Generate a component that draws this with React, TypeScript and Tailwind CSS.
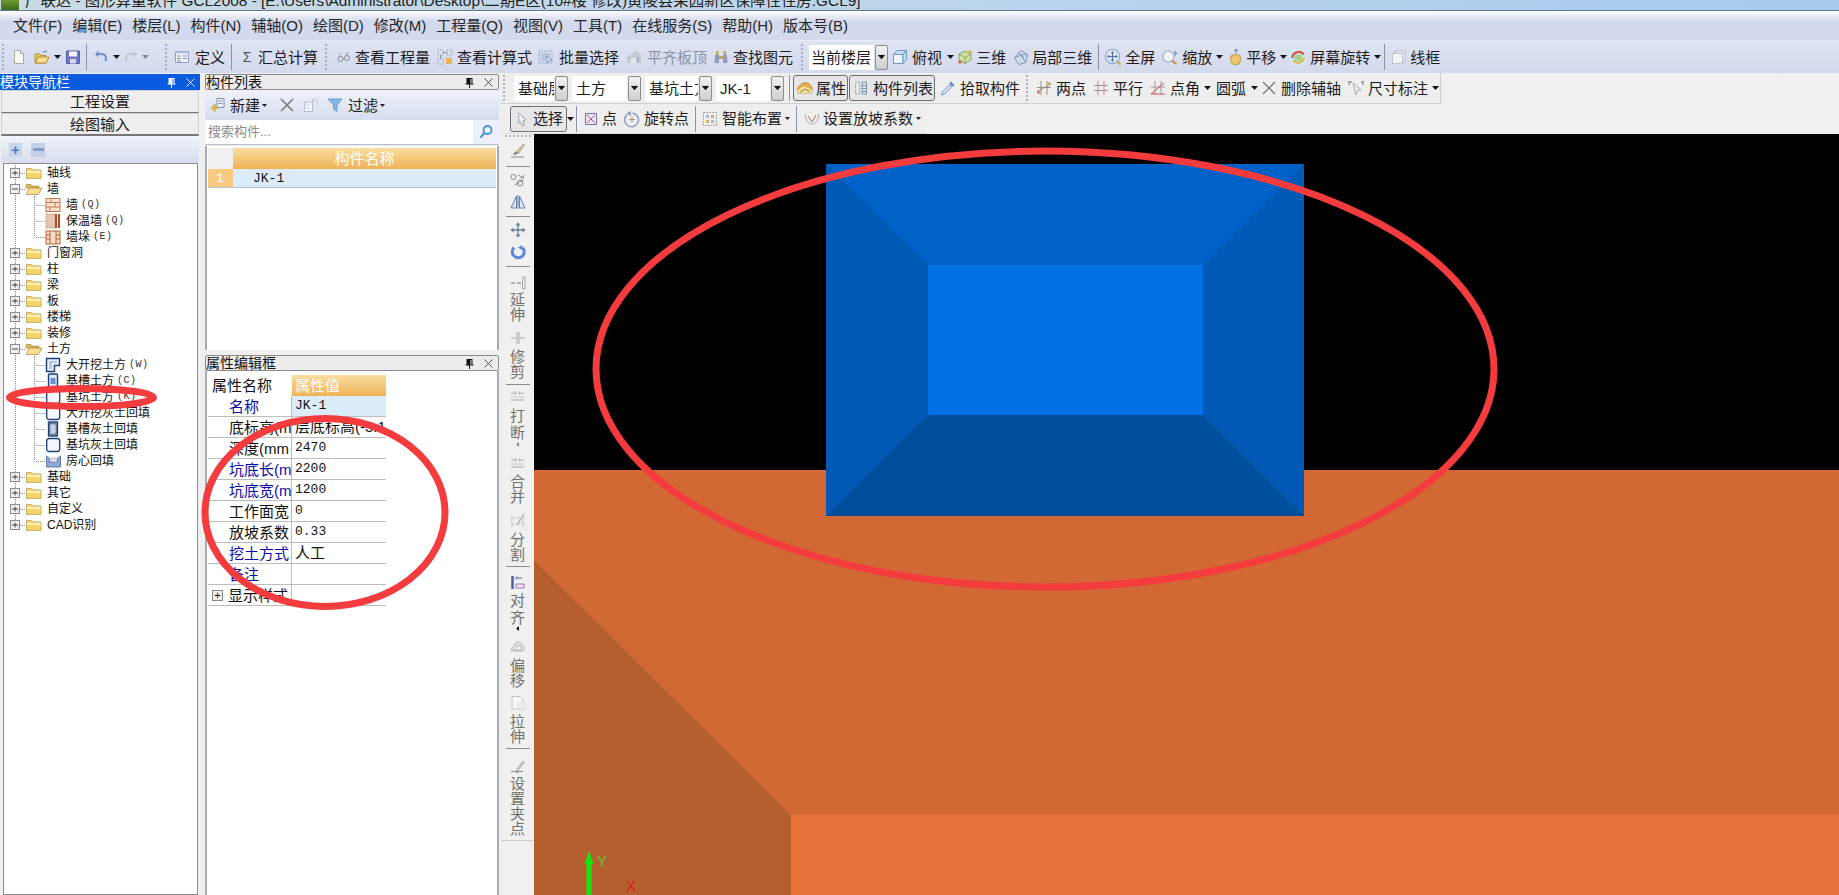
import React from 'react';

const Ic = ({ children, className = '' }: { children: React.ReactNode; className?: string }) => (
  <svg viewBox="0 0 16 16" fill="none" className={'w-4 h-4 shrink-0 ' + className}>
    {children}
  </svg>
);

// toolbar bits
const Arrow = ({ className = '', gray = false }: { className?: string; gray?: boolean }) => (
  <svg viewBox="0 0 7 4" className={'w-[7px] h-1 shrink-0 ' + className}>
    <path d="M0 0h7L3.5 4z" fill={gray ? '#7d8494' : '#111'} />
  </svg>
);
const SmallArrow = ({ className = '' }: { className?: string }) => (
  <svg viewBox="0 0 5 3" className={'w-[5px] h-[3px] shrink-0 ' + className}>
    <path d="M0 0h5L2.5 3z" fill="#222" />
  </svg>
);
const Sep = ({ className = '' }: { className?: string }) => (
  <div className={'w-px h-[26px] bg-[#8b93a3] shrink-0 ' + className} />
);
const Grip = ({ className = '' }: { className?: string }) => (
  <div className={'w-[3px] h-[26px] border-l-2 border-dotted border-[#a7aebd] shrink-0 ' + className} />
);
const Label = ({ children, className = '' }: { children: React.ReactNode; className?: string }) => (
  <span className={'text-[15px] leading-none whitespace-nowrap shrink-0 ' + className}>{children}</span>
);
const Select = ({ text, className = '', box = '' }: { text: string; className?: string; box?: string }) => (
  <div className={'flex h-[25px] shrink-0 ' + className}>
    <div className={'flex-1 bg-white overflow-hidden whitespace-nowrap text-[15px] leading-[25px] pl-1 ' + box}>{text}</div>
    <div className="w-[13px] ml-px border border-[#8d8d8d] rounded-[2px] bg-linear-to-b from-[#f2f2f2] to-[#cfcfcf] flex items-center justify-center">
      <Arrow className="scale-[1.1]" />
    </div>
  </div>
);
const Pressed = ({ children, className = '' }: { children: React.ReactNode; className?: string }) => (
  <div className={'flex items-center h-[26px] shrink-0 rounded-[3px] border border-[#6f6f6f] bg-[#e6e6e6] ' + className}>{children}</div>
);

// drawn icons
const NewFile = () => (
  <Ic><path d="M3.5 1.5h6l3 3v10h-9z" fill="#fbfbf6" stroke="#a8a8a0" /><path d="M9.5 1.5v3h3" fill="#e6e6de" stroke="#a8a8a0" /></Ic>
);
const OpenFile = () => (
  <Ic><path d="M1 5h5l1 1.5h5V14H1z" fill="#f0c860" stroke="#b08f3c" /><path d="M1.5 14 4 8h11l-3 6z" fill="#fae08e" stroke="#b08f3c" /><path d="M9 4c1-2 3-2 4-1" stroke="#5a7fc0" /></Ic>
);
const Save = () => (
  <Ic><path d="M1.5 2h13v12.500h-13z" fill="#6f77c6" stroke="#555ca8" /><path d="M4 2.500h8v5H4z" fill="#f4f4fa" /><path d="M5 10h6v4.500H5z" fill="#d6d8e6" /></Ic>
);
const Undo = ({ muted = false }: { muted?: boolean }) => (
  <Ic>
    <path d="M12.500 12c1.500-3 0-7-4-7H4" stroke={muted ? '#bcc8d6' : '#6f92cf'} strokeWidth="2.200" />
    <path d="M5.500 1.500 2 5l3.500 3.500z" fill={muted ? '#bcc8d6' : '#6f92cf'} />
  </Ic>
);
const Redo = () => (
  <Ic>
    <path d="M3.500 12c-1.500-3 0-7 4-7H12" stroke="#bcc8d6" strokeWidth="2.200" />
    <path d="M10.500 1.500 14 5l-3.500 3.500z" fill="#bcc8d6" />
  </Ic>
);
const Define = () => (
  <Ic><path d="M1.500 2.500h13v11h-13z" fill="#f2f5fb" stroke="#8da0c0" /><path d="M1.500 2.500h13v2h-13z" fill="#b5c5e0" /><path d="M3 7h4M3 9.500h4M3 12h4M9 7h4M9 9.500h4" stroke="#7f90ad" /></Ic>
);
const Glasses = () => (
  <Ic><circle cx="4.500" cy="10" r="2.500" stroke="#8d8d8d" /><circle cx="11" cy="9" r="2.500" stroke="#8d8d8d" /><path d="M7 10l1.500-1M3 8l2-4M10 7l2-4" stroke="#9b9b9b" /></Ic>
);
const Calc = () => (
  <Ic><path d="M1 1h5v5H1zM10 1h5v5h-5zM1 10h5v5H1z" fill="#dde3ef" stroke="#8a97b0" strokeDasharray="1 1" /><path d="M9 9h6v6H9z" fill="#e9b257" /><path d="M6 3.500h4M3.500 6v4" stroke="#8a97b0" /></Ic>
);
const Batch = () => (
  <Ic><path d="M1 2h13v12H1z" stroke="#7f9cc8" strokeDasharray="1.500 1" /><path d="M3 4h9v8H3z" fill="#b9c8e2" /><path d="M8 7l6 4-3 .5L9.500 14z" fill="#e8eefa" stroke="#6a82a8" strokeWidth=".7" /></Ic>
);
const AlignTop = () => (
  <Ic><path d="M1 14V8l9-6 5 3v9z" fill="#c4c9d2" /><path d="M5 14V9h5v5z" fill="#e4e7ed" /><path d="M12 8v6" stroke="#9aa1ad" /></Ic>
);
const Binoculars = () => (
  <Ic><path d="M2 6h4v8H1.500zM10 6h4l.5 8H10z" fill="#8f9cb5" /><path d="M3 2h2.500v4H3zM10.500 2H13v4h-2.500zM6 7h4v3H6z" fill="#c6a55b" /></Ic>
);
const Cube = () => (
  <Ic><path d="M1.500 5.500h9.500v9H1.500z" fill="#eef5fb" stroke="#6d9ac6" /><path d="M1.500 5.500 5 1.500h9.500l-3.500 4zM11 5.500l3.500-4v9l-3.500 4z" fill="#c3dcee" stroke="#6d9ac6" /></Ic>
);
const ThreeD = () => (
  <Ic><path d="M8 2l6 3v6l-6 3.500L2 11V5z" fill="#cfe0a6" stroke="#86a860" /><path d="M2 5l6 3.500L14 5M8 8.500v6" stroke="#86a860" /><circle cx="13" cy="3" r="1.800" fill="#e0b43c" /><circle cx="3" cy="13" r="1.800" fill="#d46b50" /></Ic>
);
const PartCube = () => (
  <Ic><path d="M8 1.500l6.500 4-2 8-6.500 2L1.500 9z" fill="#cfdcec" stroke="#7f97b5" /><path d="M1.500 9 8 6l4.500 7.500M8 6l6.500-.5M5 3.500l6 5.500" stroke="#7f97b5" /></Ic>
);
const FullScreen = () => (
  <Ic className="scale-[1.1]"><circle cx="7.500" cy="7.500" r="6.500" fill="#dbe6f4" stroke="#8ea3c2" /><path d="M7.500 3.500v8M3.500 7.500h8" stroke="#4f72a8" /><path d="M7.500 2.500 6 4.500h3zM7.500 12.500 6 10.500h3zM2.500 7.500l2-1.500v3zM12.500 7.500l-2-1.500v3z" fill="#4f72a8" /><path d="M12 12l3 3" stroke="#c7a75a" strokeWidth="2" /></Ic>
);
const Zoom = () => (
  <Ic className="scale-[1.1]"><circle cx="6.500" cy="7.500" r="5" fill="#f2f6fb" stroke="#98a8be" /><path d="M10 11.500l4 3" stroke="#b89a58" strokeWidth="2" /><path d="M13 2v5M11 4.500h4" stroke="#7f9cbf" /></Ic>
);
const Pan = () => (
  <Ic className="scale-[1.1]"><path d="M4 9c0-2 1-3 3-3h3c2 0 3 2 3 4 0 3-2 5-5 5-3 0-4-2-4-6z" fill="#ecc874" stroke="#c09d4c" /><path d="M9 1v4M7.500 2.500 9 1l1.500 1.500" stroke="#7f8ea8" /></Ic>
);
const ScreenRotate = () => (
  <Ic className="scale-[1.15]"><path d="M1 1h14v14H1z" fill="#cfeaf5" /><path d="M3 9a5.500 5.500 0 0 1 10-3" stroke="#d9534f" strokeWidth="2" /><path d="M13 8a5 5 0 0 1-9 3" stroke="#e5b64d" strokeWidth="2" /><path d="M5 6h6v5H5z" fill="#9ccf8a" /></Ic>
);
const WireFrame = () => (
  <Ic><path d="M1.500 4.500h10v10h-10z" fill="#f2f4f8" stroke="#c1c6d0" /><path d="M1.500 4.500l3-3h10v10l-3 3M4.500 1.500v3" stroke="#c1c6d0" /></Ic>
);
const PropIcon = () => (
  <Ic><path d="M1 7 6 3h5l4 4v6H1z" fill="#e4b14b" stroke="#9c7a30" strokeWidth=".7" /><path d="M1 10l6-4 8 4v3H1z" fill="#f7e09c" /><path d="M3 12l5-3 5 3" stroke="#6a8a45" /></Ic>
);
const ListIcon = () => (
  <Ic><path d="M2.500 2h4v12h-4z" stroke="#7d8fae" strokeDasharray="1 1" /><path d="M9 2h4.500v12H9z" stroke="#7d8fae" /><path d="M9 5.500h4.500M9 8.500h4.500M9 11.500h4.500" stroke="#7d8fae" /></Ic>
);
const Picker = () => (
  <Ic><path d="M11 1.500l3.500 3.500-2 2-3.500-3.500z" fill="#6c8fc2" /><path d="M9.500 5 2.500 12l-1 3 3-1 7-7z" fill="#dbe7f5" stroke="#6c8fc2" /></Ic>
);
const TwoPoint = () => (
  <Ic><path d="M5 1v14M11 1v14M1 11.500 15 4M1 7.500h14" stroke="#9b8f7c" /><circle cx="2.500" cy="12.500" r="1.300" fill="#c2673f" /><circle cx="13.500" cy="3.500" r="1.300" fill="#c2a03f" /></Ic>
);
const Parallel = () => (
  <Ic><path d="M5 1v14M11 1v14M1 5.500h14M1 10.500h14" stroke="#ad8d98" /></Ic>
);
const PointAngle = () => (
  <Ic><path d="M5 1v14M11 1v14M1 7h14" stroke="#a59aa6" /><path d="M1 14 14 3M1 14h14" stroke="#d6475a" /></Ic>
);
const Cross = ({ c = '#7f7f7f' }: { c?: string }) => (
  <Ic><path d="M2 2l12 12M14 2 2 14" stroke={c} strokeWidth="1.500" /></Ic>
);
const Dim = () => (
  <Ic><path d="M1 2h3M13 2h2M1 1v4M15 1v4" stroke="#777" /><path d="M5 3l8 7-3.500.5L8 15z" fill="#eeeeee" stroke="#aaa" /></Ic>
);
const SelectCursor = () => (
  <Ic><path d="M5 2l7 7-3 .5L10 14l-2 .5-1.500-4L4.500 12z" fill="#f6f6f6" stroke="#93a0bd" /></Ic>
);
const PointIcon = () => (
  <Ic><path d="M2.500 2.500h11v11h-11z" fill="#e9e6f3" stroke="#7a6fb0" /><path d="M4 4l8 8M12 4l-8 8" stroke="#b25a7f" /></Ic>
);
const RotatePoint = () => (
  <Ic className="scale-[1.1]"><path d="M3.500 4a6.300 6.300 0 1 0 5-1.500" stroke="#8a9fbe" strokeWidth="1.300" /><path d="M7 .5 3 3l4 2.500z" fill="#8a9fbe" /><path d="M8 6v5M5.500 8.500h5" stroke="#a9977a" /></Ic>
);
const Smart = () => (
  <Ic><path d="M1.500 1.500h13v13h-13z" stroke="#8c8c8c" strokeDasharray="1.500 1.500" /><path d="M4 4h3v3H4zM9 9h3v3H9z" fill="#a9b8d8" /><path d="M9 4h3v3H9zM4 9h3v3H4z" fill="#d8b25e" /></Ic>
);
const Slope = () => (
  <Ic><path d="M1 3c1 6 3 10 7 10s6-4 7-10" stroke="#aaaaaa" /><path d="M4 5l4 6 4-7" stroke="#c77070" /></Ic>
);
const NewIcon = () => (
  <Ic><path d="M7 1.500h7v9H7z" fill="#eef2fa" stroke="#7d93b8" /><path d="M8.500 4h4M8.500 6.500h4" stroke="#7d93b8" /><path d="M4.500 7v7.500M1 11h7" stroke="#e0b23c" strokeWidth="2.600" /></Ic>
);
const CopyIcon = () => (
  <Ic><path d="M1.500 5h8v9.500h-8z" fill="#f3f5fa" stroke="#b4bccb" /><path d="M3 8h4M3 11h4" stroke="#c5ccd8" /><path d="M11 2h3.500v7" stroke="#b4bccb" strokeDasharray="1.500 1" /><path d="M9 3.500 11 2l-.5 3" stroke="#b4bccb" /></Ic>
);
const FilterIcon = () => (
  <Ic><path d="M1 2h14L10 8v6.500L6.500 12V8z" fill="#85b6e4" stroke="#6d9fd0" /></Ic>
);
const SearchIcon = () => (
  <Ic><circle cx="9.500" cy="6" r="4" fill="#e7f2fb" stroke="#4a8fd0" strokeWidth="1.800" /><path d="M6.500 9l-4 4.500" stroke="#4a8fd0" strokeWidth="2.200" /></Ic>
);
const Pin = ({ light = false }: { light?: boolean }) => (
  <svg viewBox="0 0 9 11" className="w-[9px] h-[11px] shrink-0">
    <path d="M1.500 1h6v5.500H8.500v1H5v3.500H4V7.500H.5v-1h1zM5.500 2v4.500h1V2z" fill={light ? '#fff' : '#111'} fillRule="evenodd" />
  </svg>
);
const PanelX = ({ light = false }: { light?: boolean }) => (
  <svg viewBox="0 0 9 9" className="w-[9px] h-[9px] shrink-0">
    <path d="M.5.500l8 8M8.500.500l-8 8" stroke={light ? '#fff' : '#444'} strokeWidth=".9" />
  </svg>
);

// vertical tool icons
const Brush = () => (
  <Ic><path d="M6 10 13.500 2l1 1-6 8.500z" fill="#d6c88a" stroke="#8a8a8a" strokeWidth=".6" /><path d="M3 13c1-3 3-4 4.500-3 1 1-.5 3-4.500 3z" fill="#7f8ea8" /><path d="M1 15h13" stroke="#8a8a8a" /></Ic>
);
const Scissor = () => (
  <Ic><circle cx="3.500" cy="5" r="2.500" stroke="#8a8a8a" /><circle cx="10" cy="11" r="3" stroke="#8a8a8a" /><path d="M8 3l6 3M13.500 3v3h-3" stroke="#8a8a8a" /><path d="M5 13 13 8" stroke="#8a8a8a" /></Ic>
);
const Mirror = () => (
  <Ic><path d="M6.500 2v12H1zM9.500 2v12H15z" fill="#dfe8f4" stroke="#5f80b0" /><path d="M8 1v14" stroke="#5f80b0" /></Ic>
);
const Move = () => (
  <Ic><path d="M8 1v14M1 8h14" stroke="#6c7f9c" strokeWidth="1.400" /><path d="M8 .5 5.500 3.500h5zM8 15.500l-2.500-3h5zM.5 8l3-2.500v5zM15.500 8l-3-2.500v5z" fill="#6c7f9c" /></Ic>
);
const RotateBlue = () => (
  <Ic><path d="M4 3.500a6 6 0 1 0 8.500 0" stroke="#5a88d8" strokeWidth="3" /><path d="M12 1v5l-4-2.500z" fill="#5a88d8" /></Ic>
);
const Extend = () => (
  <Ic><path d="M1 9h4M7 9h4" stroke="#9a9a9a" strokeWidth="1.500" /><path d="M12.500 3h2.500v12h-2.500z" fill="#f2f2f2" stroke="#a8a8a8" /></Ic>
);
const Trim = () => (
  <Ic><path d="M1 8h5M10 8h5" stroke="#a8a8a8" strokeWidth="1.200" /><path d="M7 2v12M9 2v12" stroke="#a8a8a8" /></Ic>
);
const BreakIcon = () => (
  <Ic><path d="M1 5h5M9 5h5M1 12h13" stroke="#a8a8a8" strokeWidth="1.200" /><path d="M5 3l1.500 2L5 7M10 3 8.500 5 10 7" stroke="#b5b5b5" /><path d="M1 9h13" stroke="#c8c8c8" /></Ic>
);
const SplitIcon = () => (
  <Ic><path d="M1 6h14M1 12h14" stroke="#bcbcbc" strokeDasharray="1.500 1" /><path d="M7 13 14 2" stroke="#a8a8a8" strokeWidth="1.300" /><path d="M2 3v12M13 6v9" stroke="#cccccc" /></Ic>
);
const AlignIcon = () => (
  <Ic><path d="M2.500 2v13" stroke="#4b5fa8" strokeWidth="2.500" /><path d="M6 10h8v4H6z" fill="#f4e3ee" stroke="#9878a8" /><path d="M6 4h6M7 2.500 5.500 4 7 5.500" stroke="#4b6fb0" /></Ic>
);
const OffsetIcon = () => (
  <Ic><path d="M2 12c-2-3 2-4 3-7 2-3 5-3 7 0 2 2 3 5 1 7z" fill="#dedede" stroke="#b5b5b5" /><path d="M5 11c-1-2 2-2 2.500-4 1-1 2-1 3 1 1 1 1.500 2 .5 3z" fill="#f4f4f4" stroke="#b5b5b5" /></Ic>
);
const StretchIcon = () => (
  <Ic><path d="M2 1.500h8l3 3V14H2z" fill="#f6f6f6" stroke="#c4c4c4" /><path d="M8 8h7v6H8z" fill="#eeeeee" stroke="#cccccc" strokeDasharray="1 1" /></Ic>
);
const GripIcon = () => (
  <Ic><path d="M7 11l6-8 1.500 1-6 8z" fill="#c8c8c8" stroke="#9a9a9a" strokeWidth=".6" /><path d="M1 13.500h4M9 13.500h4" stroke="#8a8a8a" /><circle cx="7" cy="13.500" r="1.500" fill="#8a8a8a" /></Ic>
);

const VSep = ({ className = '' }: { className?: string }) => <div className={'w-[24px] h-px bg-[#8d8d8d] shrink-0 ' + className} />;
const VText = ({ chars, className = '' }: { chars: string; className?: string }) => (
  <div className={'flex flex-col items-center text-[15px] leading-[15px] text-[#707070] ' + className}>
    {chars.split('').map((c, i) => <span key={i}>{c}</span>)}
  </div>
);
const LeftArrow = ({ dark = false }: { dark?: boolean }) => (
  <svg viewBox="0 0 3 5" className="w-[3px] h-[5px] shrink-0">
    <path d="M3 0v5L0 2.500z" fill={dark ? '#111' : '#8a8a8a'} />
  </svg>
);

// tree
const Folder = ({ open = false }: { open?: boolean }) => (
  open ? (
    <g>
      <path d="M0 3.500h5l1.500 1.500H13v2H0z" fill="#d9b95c" stroke="#a98d44" strokeWidth=".7" />
      <path d="M0 13.500 3 7h13l-3.500 6.500z" fill="#f7dc8c" stroke="#a98d44" strokeWidth=".7" />
    </g>
  ) : (
    <g>
      <path d="M.5 3.500h5L7 5h8v8.500H.5z" fill="#f6d26a" stroke="#b59a52" strokeWidth=".7" />
      <path d="M1 6h13.500v2H1z" fill="#fdf0bd" />
    </g>
  )
);
const Box = ({ x, open }: { x: number; open: boolean }) => (
  <g>
    <rect x={x + 0.5} y="3.500" width="9" height="9" fill="#f1f1f1" stroke="#8a8a8a" />
    <path d={open ? `M${x + 2} 8h6` : `M${x + 2} 8h6M${x + 5} 5.500v5`} stroke="#444" />
  </g>
);

type NodeKind = 'brick' | 'insul' | 'pier' | 'open' | 'slot' | 'pit' | 'slotFill' | 'room';
const childIcon = (k: NodeKind) => {
  switch (k) {
    case 'brick':
      return <g><rect x="0" y="1.500" width="14" height="13" fill="#f9e2d0" stroke="#c2794a" /><path d="M0 5.500h14M0 10h14M5 1.500v4M9 5.500V10M4 10v4.500" stroke="#c2794a" /></g>;
    case 'insul':
      return <g><rect x="0" y="1" width="9" height="14" fill="#e6c5b0" stroke="#c7a08a" strokeDasharray="2 1" /><rect x="9" y="1" width="5" height="14" fill="#b04d2a" /><path d="M11.500 1v14" stroke="#f3e3d8" /></g>;
    case 'pier':
      return <g><rect x="0" y="2" width="14" height="13" fill="#f5dcc6" stroke="#b7653a" /><path d="M4 2v13M10 2v13M0 6h4M0 10h4M10 6h4M10 10h4" stroke="#b7653a" /></g>;
    case 'open':
      return <g><path d="M.5 1.500h13v7h-5v6h-8z" fill="#e9f0fb" stroke="#1d3f78" strokeWidth="1.400" /><path d="M3 4h8v2H6v6H3z" fill="#b7cbe9" /></g>;
    case 'slot':
      return <g><rect x="2.500" y="1" width="9" height="14" rx="1" fill="#dfe8f6" stroke="#1d3f78" strokeWidth="1.400" /><rect x="4.500" y="5" width="5" height="6" fill="#6a8ec8" /></g>;
    case 'pit':
      return <rect x=".7" y="1.500" width="13" height="13" rx="2.500" fill="#f3f7fd" stroke="#1d3f78" strokeWidth="1.300" />;
    case 'slotFill':
      return <g><rect x="2.500" y="1" width="9" height="14" fill="#7f8fa8" stroke="#1d3f78" strokeWidth="1.300" /><path d="M4 3h6v10H4z" fill="#c9d2de" strokeDasharray="1 1" stroke="#3e5575" /></g>;
    case 'room':
      return <g><path d="M.5 3v11h14V3l-3 2.500V9H3.500V5.500z" fill="#8fa8d8" stroke="#49659f" strokeWidth=".8" /><path d="M5 5h6v4H5z" fill="#dcdfe8" strokeDasharray="1 1" stroke="#9aa6bd" /></g>;
  }
};

type TreeRow = { label: string; hot?: string; kind?: NodeKind; open?: boolean; last?: boolean };
const treeRows: TreeRow[] = [
  { label: '轴线' },
  { label: '墙', open: true },
  { label: '墙', hot: '(Q)', kind: 'brick' },
  { label: '保温墙', hot: '(Q)', kind: 'insul' },
  { label: '墙垛', hot: '(E)', kind: 'pier', last: true },
  { label: '门窗洞' },
  { label: '柱' },
  { label: '梁' },
  { label: '板' },
  { label: '楼梯' },
  { label: '装修' },
  { label: '土方', open: true },
  { label: '大开挖土方', hot: '(W)', kind: 'open' },
  { label: '基槽土方', hot: '(C)', kind: 'slot' },
  { label: '基坑土方', hot: '(K)', kind: 'pit' },
  { label: '大开挖灰土回填', kind: 'pit' },
  { label: '基槽灰土回填', kind: 'slotFill' },
  { label: '基坑灰土回填', kind: 'pit' },
  { label: '房心回填', kind: 'room', last: true },
  { label: '基础' },
  { label: '其它' },
  { label: '自定义' },
  { label: 'CAD识别' },
];

const Tree = () => (
  <div className="pt-px">
    {treeRows.map((r, i) => {
      const isLast = i === treeRows.length - 1;
      return (
        <div key={i} className="flex items-center h-4 text-[12px] leading-none text-[#111]">
          {r.kind ? (
            <svg viewBox="0 0 61 16" fill="none" className="w-[61px] h-4 shrink-0">
              <path d="M11.500 0v16" stroke="#888" strokeDasharray="1 1" />
              <path d={r.last ? 'M30.500 0v8.500h11' : 'M30.500 0v16M30.500 8.500h11'} stroke="#888" strokeDasharray="1 1" />
              <g transform="translate(42 0)">{childIcon(r.kind)}</g>
            </svg>
          ) : (
            <svg viewBox="0 0 42 16" fill="none" className="w-[42px] h-4 shrink-0">
              <path d={isLast ? 'M11.500 0v4' : 'M11.500 0v16'} stroke="#888" strokeDasharray="1 1" />
              {r.open && <path d="M30.500 13v3" stroke="#888" strokeDasharray="1 1" />}
              <path d="M16 8.500h6" stroke="#888" strokeDasharray="1 1" />
              <Box x={6} open={!!r.open} />
              <g transform="translate(22 0)"><Folder open={r.open} /></g>
            </svg>
          )}
          <span className="whitespace-nowrap ml-px">{r.label}</span>
          {r.hot && <span className="ml-[3px] text-[10px] font-['Liberation_Mono',monospace] tracking-[0.5px] text-[#333]">{r.hot}</span>}
        </div>
      );
    })}
  </div>
);

// panel header
const PanelHead = ({ title }: { title: string }) => (
  <div className="flex items-center h-[16px] border border-[#8b8b8b] rounded-[2px] bg-[#ececec] text-[14px] leading-none text-[#111] shrink-0">
    <span className="flex-1">{title}</span>
    <Pin />
    <span className="w-[9px] ml-[10px] mr-[5px] flex"><PanelX /></span>
  </div>
);

type PropRow = { name: string; value: string; blue?: boolean; plus?: boolean; cjk?: boolean };
const propRows: PropRow[] = [
  { name: '名称', value: 'JK-1', blue: true },
  { name: '底标高(m', value: '层底标高(-3.1)', cjk: true },
  { name: '深度(mm', value: '2470' },
  { name: '坑底长(m', value: '2200', blue: true },
  { name: '坑底宽(m', value: '1200', blue: true },
  { name: '工作面宽', value: '0' },
  { name: '放坡系数', value: '0.33' },
  { name: '挖土方式', value: '人工', blue: true, cjk: true },
  { name: '备注', value: '', blue: true },
  { name: '显示样式', value: '', plus: true },
];

export default function App() {
  return (
    <div className="relative w-[1839px] h-[895px] overflow-hidden flex flex-col bg-[#f0f0f0] text-[#1c1c1c] font-['Liberation_Sans','Noto_Sans_CJK_SC',sans-serif]">
      {/* title bar, only its lower edge is on screen */}
      <div className="h-[11px] shrink-0 overflow-hidden border-b border-[#5e7998] bg-linear-to-r from-[#cbdbe4] via-[#bcd5ea] to-[#a6cbef] flex">
        <div className="w-[18px] h-[10px] bg-linear-to-b from-[#6f9a2e] to-[#3d6a1c] shrink-0 ml-px" />
        <div className="ml-[6px] -mt-[9px] text-[15.4px] leading-[19px] whitespace-nowrap text-[#222]">
          广联达 - 图形算量软件 GCL2008 - [E:\Users\Administrator\Desktop\二期E区(10#楼 修改)黄陵县果园新区保障性住房.GCL9]
        </div>
      </div>

      {/* menu */}
      <div className="h-[29px] shrink-0 flex items-center gap-[10px] pl-[13px] text-[15px] leading-none bg-linear-to-b from-[#ffffff] to-[#d3daed] to-[35%] text-[#262626]">
        {['文件(F)', '编辑(E)', '楼层(L)', '构件(N)', '辅轴(O)', '绘图(D)', '修改(M)', '工程量(Q)', '视图(V)', '工具(T)', '在线服务(S)', '帮助(H)', '版本号(B)'].map(m => (
          <span key={m} className="whitespace-nowrap">{m}</span>
        ))}
      </div>

      {/* main toolbar */}
      <div className="h-[33px] shrink-0 flex items-center bg-linear-to-b from-[#dee3f2] to-[#d3daed] border-t border-[#e8ebf5]">
        <Grip className="ml-[2px]" />
        <span className="ml-[6px]"><NewFile /></span>
        <span className="ml-[7px]"><OpenFile /></span>
        <Arrow className="ml-[4px]" />
        <span className="ml-[4px]"><Save /></span>
        <Sep className="ml-[5px]" />
        <span className="ml-[6px]"><Undo /></span>
        <Arrow className="ml-[4px]" />
        <span className="ml-[3px]"><Redo /></span>
        <Arrow gray className="ml-[3px]" />
        <Grip className="ml-[16px]" />
        <span className="ml-[6px]"><Define /></span>
        <Label className="ml-[5px]">定义</Label>
        <Sep className="ml-[6px]" />
        <span className="ml-[7px] w-4 text-center text-[14px] leading-none text-[#555]">Σ</span>
        <Label className="ml-[3px]">汇总计算</Label>
        <Grip className="ml-[7px]" />
        <span className="ml-[8px]"><Glasses /></span>
        <Label className="ml-[3px]">查看工程量</Label>
        <span className="ml-[7px]"><Calc /></span>
        <Label className="ml-[4px]">查看计算式</Label>
        <span className="ml-[6px]"><Batch /></span>
        <Label className="ml-[5px]">批量选择</Label>
        <span className="ml-[7px]"><AlignTop /></span>
        <Label className="ml-[5px] text-[#8d93a3]">平齐板顶</Label>
        <span className="ml-[6px]"><Binoculars /></span>
        <Label className="ml-[4px]">查找图元</Label>
        <Grip className="ml-[8px]" />
        <Select text="当前楼层" className="ml-[5px] w-[79px]" box="pl-[2px]" />
        <span className="ml-[4px]"><Cube /></span>
        <Label className="ml-[4px]">俯视</Label>
        <Arrow className="ml-[5px]" />
        <span className="ml-[3px]"><ThreeD /></span>
        <Label className="ml-[3px]">三维</Label>
        <span className="ml-[7px]"><PartCube /></span>
        <Label className="ml-[3px]">局部三维</Label>
        <Sep className="ml-[6px]" />
        <span className="ml-[6px]"><FullScreen /></span>
        <Label className="ml-[4px]">全屏</Label>
        <span className="ml-[7px]"><Zoom /></span>
        <Label className="ml-[4px]">缩放</Label>
        <Arrow className="ml-[4px]" />
        <span className="ml-[4px]"><Pan /></span>
        <Label className="ml-[3px]">平移</Label>
        <Arrow className="ml-[4px]" />
        <span className="ml-[3px]"><ScreenRotate /></span>
        <Label className="ml-[4px]">屏幕旋转</Label>
        <Arrow className="ml-[4px]" />
        <Sep className="ml-[3px]" />
        <span className="ml-[6px]"><WireFrame /></span>
        <Label className="ml-[3px]">线框</Label>
      </div>

      <div className="flex-1 flex min-h-0">
        {/* module nav */}
        <div className="w-[200px] shrink-0 flex flex-col pt-px">
          <div className="h-[16px] bg-[#0a5be0] text-white text-[14px] leading-none flex items-center shrink-0">
            <span className="flex-1">模块导航栏</span>
            <Pin light />
            <span className="w-[9px] ml-[10px] mr-[5px] flex"><PanelX light /></span>
          </div>
          <div className="h-[23px] shrink-0 mx-px flex items-center justify-center text-[15px] leading-none bg-[#eeeeee] border border-[#d0d0d0] border-b-[#777]">工程设置</div>
          <div className="h-[23px] shrink-0 mx-px flex items-center justify-center text-[15px] leading-none bg-[#eeeeee] border border-[#d0d0d0] border-b-2 border-b-[#777]">绘图输入</div>
          <div className="h-[27px] shrink-0 flex items-center pl-[8px] gap-[2px] mx-px bg-linear-to-b from-[#f1f3fa] to-[#d6ddee]">
            <span className="w-[13px] h-[14px] bg-[#c9d7ee] flex items-center justify-center text-[#4c7cc0] text-[15px] font-bold leading-none mr-[7px]">+</span>
            <span className="w-[14px] h-[14px] bg-[#c5d0e6] flex items-center justify-center"><span className="w-[11px] h-[3px] bg-[#7e9cc9]" /></span>
          </div>
          <div className="flex-1 ml-[3px] mr-[2px] border border-[#8d8d8d] bg-white"><Tree /></div>
        </div>

        {/* component list and property panels */}
        <div className="w-[294px] shrink-0 ml-[5px] flex flex-col pt-px">
          <PanelHead title="构件列表" />
          <div className="h-[30px] shrink-0 flex items-center bg-linear-to-b from-[#f0f2f9] to-[#d5dcee]">
            <span className="ml-[5px]"><NewIcon /></span>
            <Label className="ml-[4px]">新建</Label>
            <SmallArrow className="ml-[2px]" />
            <span className="ml-[12px]"><Cross c="#777" /></span>
            <span className="ml-[8px]"><CopyIcon /></span>
            <span className="ml-[8px]"><FilterIcon /></span>
            <Label className="ml-[5px]">过滤</Label>
            <SmallArrow className="ml-[2px]" />
          </div>
          <div className="h-[25px] shrink-0 flex items-center bg-[#edf0f8] border-b border-[#b8bcc6]">
            <div className="w-[267px] h-[24px] ml-px bg-white text-[13px] leading-[24px] pl-[2px] text-[#8a8a8a]">搜索构件...</div>
            <span className="ml-[5px]"><SearchIcon /></span>
          </div>
          <div className="h-[204px] shrink-0 border-x-2 border-[#a8abb2] bg-white mt-px">
            <div className="flex h-[21px] mt-[2px] mx-px">
              <div className="w-[25px] bg-[#f0f0f0]" />
              <div className="flex-1 bg-linear-to-b from-[#f9dd9f] to-[#efb255] text-white text-[15px] leading-[21px] text-center">构件名称</div>
            </div>
            <div className="flex h-[19px] mx-px border-b border-[#b9c2cc]">
              <div className="w-[25px] bg-[#f7c983] text-white text-[13px] leading-[19px] pl-[8px] font-['Liberation_Mono',monospace]">1</div>
              <div className="flex-1 bg-[#dcebf9] text-[13px] leading-[19px] pl-[20px] text-[#111] font-['Liberation_Mono',monospace]">JK-1</div>
            </div>
          </div>
          <div className="h-[5px] shrink-0" />
          <PanelHead title="属性编辑框" />
          <div className="flex-1 border-x-2 border-[#a8abb2] bg-white pt-[4px] pl-px min-h-0">
            <div className="flex h-[21px] w-[178px]">
              <div className="w-[84px] text-[15px] leading-[21px] pl-[4px] text-[#111]">属性名称</div>
              <div className="flex-1 bg-linear-to-b from-[#f9dd9f] to-[#efb255] text-white text-[15px] leading-[21px] pl-[3px]">属性值</div>
            </div>
            {propRows.map((r, i) => (
              <div key={r.name} className="flex h-[21px] w-[178px] border-b border-[#bcbcbc]">
                <div className={'w-[84px] shrink-0 flex items-center overflow-hidden whitespace-nowrap border-r border-[#bcbcbc] text-[15px] leading-none ' + (r.blue ? 'text-[#0a0aa8]' : 'text-[#111]')}>
                  {r.plus ? (
                    <span className="ml-[4px] w-[11px] h-[11px] border border-[#888] bg-[#eeeeee] flex items-center justify-center text-[11px] leading-none text-[#111] mr-[5px]">+</span>
                  ) : (
                    <span className="w-[21px] shrink-0" />
                  )}
                  {r.name}
                </div>
                <div className={'flex-1 min-w-0 overflow-hidden whitespace-nowrap pl-[3px] leading-[20px] text-[#111] ' + (r.cjk ? 'text-[15px]' : "text-[13px] font-['Liberation_Mono',monospace] ") + (i === 0 ? ' bg-[#dcebf9]' : '')}>
                  {r.value}
                </div>
              </div>
            ))}
          </div>
        </div>

        {/* right side */}
        <div className="flex-1 min-w-0 flex flex-col ml-px">
          <div className="h-[31px] shrink-0 w-[941px] flex items-center bg-[#eeeeee] border-b border-[#cfcfcf] border-r">
            <Grip className="ml-[3px]" />
            <Select text="基础层" className="ml-[8px] w-[54px]" box="pl-0" />
            <Select text="土方" className="ml-[4px] w-[69px]" box="pl-0" />
            <Select text="基坑土方" className="ml-[4px] w-[67px]" box="pl-0" />
            <Select text="JK-1" className="ml-[4px] w-[68px]" />
            <Sep className="ml-[5px]" />
            <Pressed className="ml-[3px] w-[55px]">
              <span className="ml-[3px]"><PropIcon /></span>
              <Label className="ml-[3px]">属性</Label>
            </Pressed>
            <Pressed className="ml-px w-[86px]">
              <span className="ml-[3px]"><ListIcon /></span>
              <Label className="ml-[4px]">构件列表</Label>
            </Pressed>
            <span className="ml-[5px]"><Picker /></span>
            <Label className="ml-[4px]">拾取构件</Label>
            <Grip className="ml-[6px]" />
            <span className="ml-[7px]"><TwoPoint /></span>
            <Label className="ml-[4px]">两点</Label>
            <span className="ml-[7px]"><Parallel /></span>
            <Label className="ml-[4px]">平行</Label>
            <span className="ml-[7px]"><PointAngle /></span>
            <Label className="ml-[4px]">点角</Label>
            <Arrow className="ml-[4px]" />
            <Label className="ml-[5px]">圆弧</Label>
            <Arrow className="ml-[5px]" />
            <span className="ml-[3px]"><Cross /></span>
            <Label className="ml-[4px]">删除辅轴</Label>
            <span className="ml-[7px]"><Dim /></span>
            <Label className="ml-[4px]">尺寸标注</Label>
            <Arrow className="ml-[4px]" />
          </div>
          <div className="h-[30px] shrink-0 w-[425px] flex items-center bg-[#eeeeee] border-b border-[#dddddd]">
            <Pressed className="ml-[10px] w-[57px]">
              <span className="ml-[3px]"><SelectCursor /></span>
              <Label className="ml-[3px]">选择</Label>
            </Pressed>
            <Arrow />
            <Sep className="ml-[2px]" />
            <span className="ml-[6px]"><PointIcon /></span>
            <Label className="ml-[3px]">点</Label>
            <span className="ml-[7px]"><RotatePoint /></span>
            <Label className="ml-[4px]">旋转点</Label>
            <Sep className="ml-[6px]" />
            <span className="ml-[6px]"><Smart /></span>
            <Label className="ml-[4px]">智能布置</Label>
            <SmallArrow className="ml-[3px]" />
            <Sep className="ml-[6px]" />
            <span className="ml-[7px]"><Slope /></span>
            <Label className="ml-[3px]">设置放坡系数</Label>
            <SmallArrow className="ml-[3px]" />
          </div>
          <div className="flex-1 min-h-0 flex">
            {/* vertical tools */}
            <div className="w-[33px] shrink-0 ml-px self-start flex flex-col items-center border-b border-[#cccccc] pb-[4px]">
              <div className="w-[26px] h-[6px] border-t-2 border-dotted border-[#b4b4b4] mt-px" />
              <span className="mt-[1px]"><Brush /></span>
              <VSep className="mt-[8px]" />
              <span className="mt-[5px]"><Scissor /></span>
              <span className="mt-[6px]"><Mirror /></span>
              <VSep className="mt-[6px]" />
              <span className="mt-[5px]"><Move /></span>
              <span className="mt-[6px]"><RotateBlue /></span>
              <VSep className="mt-[6px]" />
              <span className="mt-[7px]"><Extend /></span>
              <VText chars="延伸" className="mt-[2px]" />
              <span className="mt-[8px]"><Trim /></span>
              <VText chars="修剪" className="mt-[3px]" />
              <VSep className="mt-[5px]" />
              <span className="mt-[3px]"><BreakIcon /></span>
              <VText chars="打断" className="mt-[3px] leading-[17px]" />
              <span className="mt-px"><LeftArrow /></span>
              <span className="mt-[8px]"><BreakIcon /></span>
              <VText chars="合并" className="mt-[3px]" />
              <span className="mt-[8px]"><SplitIcon /></span>
              <VText chars="分割" className="mt-[4px]" />
              <VSep className="mt-[4px]" />
              <span className="mt-[7px]"><AlignIcon /></span>
              <VText chars="对齐" className="mt-[2px] leading-[17px] text-[#111]" />
              <LeftArrow dark />
              <span className="mt-[8px]"><OffsetIcon /></span>
              <VText chars="偏移" className="mt-[3px]" />
              <span className="mt-[7px]"><StretchIcon /></span>
              <VText chars="拉伸" className="mt-[3px]" />
              <VSep className="mt-[4px]" />
              <span className="mt-[9px]"><GripIcon /></span>
              <VText chars="设置夹点" className="mt-[2px]" />
            </div>

            {/* 3D view */}
            <svg viewBox="534 134 1305 761" className="w-[1305px] h-[761px] shrink-0 bg-black">
              <rect x="534" y="470" width="1305" height="425" fill="#d26833" />
              <path d="M534 560 791 815V895H534z" fill="#b55f2f" />
              <path d="M791 815H1839V895H791z" fill="#e5733a" />
              <rect x="826" y="164" width="478" height="352" fill="#0059b5" />
              <path d="M826 164H1304L1203 265H928z" fill="#0062c9" />
              <path d="M826 516H1304L1203 415H928z" fill="#004f9c" />
              <rect x="928" y="265" width="275" height="150" fill="#0071e5" />
              <path d="M589 895V862" stroke="#11e611" strokeWidth="5" />
              <path d="M589 851 584.500 864H593.500z" fill="#11e611" />
              <text x="597" y="866" fontSize="15" fill="#5fc43c" fontFamily="Liberation Sans, sans-serif">Y</text>
              <text x="626" y="891" fontSize="15" fill="#e02020" fontFamily="Liberation Sans, sans-serif">X</text>
            </svg>
          </div>
        </div>
      </div>

      {/* hand drawn red marks over the screenshot */}
      <svg viewBox="0 0 1839 895" className="absolute inset-0 w-[1839px] h-[895px] pointer-events-none" fill="none">
        <ellipse cx="1045" cy="369" rx="449" ry="218" stroke="#f43b3d" strokeWidth="7" />
        <ellipse cx="325" cy="512.500" rx="120" ry="94" stroke="#f43b3d" strokeWidth="7" />
        <ellipse cx="81.500" cy="397.500" rx="72" ry="9" stroke="#f43b3d" strokeWidth="7" />
      </svg>
    </div>
  );
}
